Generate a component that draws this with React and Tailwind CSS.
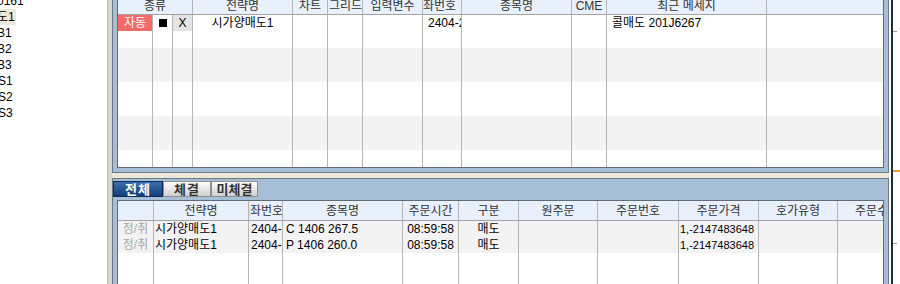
import React from "react";

const LINE = "border-[#b5b5b5]";

function Cell({ w, last, className = "", children }) {
  return (
    <div
      className={`shrink-0 h-full overflow-hidden flex items-center whitespace-nowrap ${w} ${
        last ? "" : `border-r ${LINE}`
      } ${className}`}
    >
      {children}
    </div>
  );
}

const TOP_W = [
  "w-[35px]",
  "w-[20px]",
  "w-[20px]",
  "w-[100px]",
  "w-[35px]",
  "w-[35px]",
  "w-[60px]",
  "w-[39px]",
  "w-[110px]",
  "w-[35px]",
  "w-[160px]",
  "w-[116px]",
];

const BOT_W = [
  "w-[36px]",
  "w-[95px]",
  "w-[34px]",
  "w-[120px]",
  "w-[56px]",
  "w-[60px]",
  "w-[79px]",
  "w-[81px]",
  "w-[80px]",
  "w-[79px]",
  "w-[45px]",
];

const TOP_ROWS = [
  { h: "h-[16px]", bg: "bg-white" },
  { h: "h-[17px]", bg: "bg-white" },
  { h: "h-[17px]", bg: "bg-[#f3f3f3]" },
  { h: "h-[17px]", bg: "bg-[#f3f3f3]" },
  { h: "h-[17px]", bg: "bg-white" },
  { h: "h-[17px]", bg: "bg-white" },
  { h: "h-[17px]", bg: "bg-[#f3f3f3]" },
  { h: "h-[17px]", bg: "bg-[#f3f3f3]" },
  { h: "h-[17px]", bg: "bg-white" },
];

const BOT_ROWS = [
  { bg: "bg-[#f3f3f3]", data: true, item: "C 1406 267.5" },
  { bg: "bg-[#f3f3f3]", data: true, item: "P 1406 260.0" },
  { bg: "bg-white" },
  { bg: "bg-white" },
];

function TopGrid() {
  return (
    <div className="flex-1 min-h-0 flex flex-col overflow-hidden bg-white border-x border-b border-[#5f6b78]">
      <div className="-mt-[3px] h-[18px] shrink-0 flex bg-[#e8f0fb] border-b border-[#a3a3a3] text-[#333]">
        <Cell w="w-[75px]" className="justify-center">종류</Cell>
        <Cell w="w-[100px]" className="justify-center">전략명</Cell>
        <Cell w="w-[35px]" className="justify-center">차트</Cell>
        <Cell w="w-[35px]">
          <span className="ml-[1px]">그리드</span>
        </Cell>
        <Cell w="w-[60px]" className="justify-center">입력변수</Cell>
        <Cell w="w-[39px]">
          <span className="-ml-[11px]">계좌번호</span>
        </Cell>
        <Cell w="w-[110px]" className="justify-center">종목명</Cell>
        <Cell w="w-[35px]" className="justify-center">CME</Cell>
        <Cell w="w-[160px]" className="justify-center">최근 메세지</Cell>
        <Cell w="w-[116px]" last />
      </div>
      {TOP_ROWS.map((r, i) => (
        <div key={i} className={`${r.h} shrink-0 flex ${r.bg}`}>
          {TOP_W.map((w, j) => {
            const last = j === TOP_W.length - 1;
            if (i === 0) {
              if (j === 0)
                return (
                  <Cell key={j} w={w} className="justify-center bg-[#f26a6a] text-white">
                    자동
                  </Cell>
                );
              if (j === 1)
                return (
                  <Cell key={j} w={w} className="justify-center">
                    <div className="w-[8px] h-[8px] bg-black" />
                  </Cell>
                );
              if (j === 2)
                return (
                  <Cell key={j} w={w} className="justify-center bg-[#e4e4e4]">
                    X
                  </Cell>
                );
              if (j === 3)
                return (
                  <Cell key={j} w={w} className="justify-center">
                    시가양매도1
                  </Cell>
                );
              if (j === 7)
                return (
                  <Cell key={j} w={w} className="pl-[5px]">
                    2404-2
                  </Cell>
                );
              if (j === 10)
                return (
                  <Cell key={j} w={w} className="pl-[5px]">
                    콜매도 201J6267
                  </Cell>
                );
            }
            return <Cell key={j} w={w} last={last} />;
          })}
        </div>
      ))}
    </div>
  );
}

function BottomGrid() {
  return (
    <div className="mt-[3px] mx-[4px] flex-1 min-h-0 flex flex-col overflow-hidden bg-white border-t border-x border-[#5f6b78]">
      <div className="h-[20px] shrink-0 flex bg-[#e8f0fb] border-b border-[#a3a3a3] text-[#333]">
        <Cell w={BOT_W[0]} />
        <Cell w={BOT_W[1]} className="justify-center">전략명</Cell>
        <Cell w={BOT_W[2]}>
          <span className="-ml-[10px]">계좌번호</span>
        </Cell>
        <Cell w={BOT_W[3]} className="justify-center">종목명</Cell>
        <Cell w={BOT_W[4]} className="justify-center">주문시간</Cell>
        <Cell w={BOT_W[5]} className="justify-center">구분</Cell>
        <Cell w={BOT_W[6]} className="justify-center">원주문</Cell>
        <Cell w={BOT_W[7]} className="justify-center">주문번호</Cell>
        <Cell w={BOT_W[8]} className="justify-center">주문가격</Cell>
        <Cell w={BOT_W[9]} className="justify-center">호가유형</Cell>
        <Cell w={BOT_W[10]} last className="pl-[17px]">주문수량</Cell>
      </div>
      {BOT_ROWS.map((r, i) => (
        <div key={i} className={`h-[16px] shrink-0 flex ${r.bg}`}>
          {r.data ? (
            <>
              <Cell w={BOT_W[0]} className="justify-center text-[#a8a8a8]">정/취</Cell>
              <Cell w={BOT_W[1]} className="pl-[1px]">시가양매도1</Cell>
              <Cell w={BOT_W[2]} className="pl-[2px]">2404-</Cell>
              <Cell w={BOT_W[3]} className="pl-[3px]">{r.item}</Cell>
              <Cell w={BOT_W[4]} className="justify-center">08:59:58</Cell>
              <Cell w={BOT_W[5]} className="justify-center">매도</Cell>
              <Cell w={BOT_W[6]} />
              <Cell w={BOT_W[7]} />
              <Cell w={BOT_W[8]} className="pl-[1px] text-[11px]">1,-2147483648</Cell>
              <Cell w={BOT_W[9]} />
              <Cell w={BOT_W[10]} last />
            </>
          ) : (
            BOT_W.map((w, j) => <Cell key={j} w={w} last={j === BOT_W.length - 1} />)
          )}
        </div>
      ))}
    </div>
  );
}

export default function App() {
  return (
    <div className="w-[900px] h-[284px] overflow-hidden flex bg-white text-[12px] leading-none text-black font-['Liberation_Sans','Noto_Sans_CJK_KR',sans-serif]">
      {/* left list */}
      <div className="w-[107px] shrink-0 overflow-hidden bg-white">
        <div className="-mt-[7px] flex flex-col">
          <div className="h-[16px] flex items-center whitespace-nowrap -ml-[3px]">0161</div>
          <div className="h-[16px] flex items-center">
            <span className="h-full flex items-center bg-[#ece9d8] -ml-[3px] pr-[1px] whitespace-nowrap">
              도1
            </span>
          </div>
          <div className="h-[16px] flex items-center whitespace-nowrap -ml-[3px]">B1</div>
          <div className="h-[16px] flex items-center whitespace-nowrap -ml-[3px]">B2</div>
          <div className="h-[16px] flex items-center whitespace-nowrap -ml-[3px]">B3</div>
          <div className="h-[16px] flex items-center whitespace-nowrap -ml-[2px]">S1</div>
          <div className="h-[16px] flex items-center whitespace-nowrap -ml-[2px]">S2</div>
          <div className="h-[16px] flex items-center whitespace-nowrap -ml-[2px]">S3</div>
        </div>
      </div>

      {/* splitter */}
      <div className="w-[5px] shrink-0 flex">
        <div className="w-[1px] bg-[#b8b8b8]" />
        <div className="w-[4px] bg-[#d9d6cb]" />
      </div>

      {/* main */}
      <div className="w-[777px] shrink-0 flex flex-col bg-[#ece9d8]">
        <div className="h-[173px] shrink-0 flex flex-col bg-[#a6bfd7] border-x border-b border-[#6d7987] px-[4px] pb-[4px]">
          <TopGrid />
        </div>

        <div className="mt-[5px] flex-1 min-h-0 flex flex-col bg-[#a6bfd7] border-t border-x border-[#6d7987] overflow-hidden">
          <div className="pt-[2px] flex shrink-0">
            <div className="w-[50px] h-[16px] flex items-center justify-center font-bold text-[13px] text-white bg-linear-to-b from-[#3a6fae] to-[#123f7a] border border-[#0d2a55] tracking-[1px]">
              전체
            </div>
            <div className="w-[48px] h-[16px] flex items-center justify-center font-bold text-[13px] text-[#333] bg-linear-to-b from-[#ffffff] to-[#cfcfcf] border border-[#8f8f8f] tracking-[1px]">
              체결
            </div>
            <div className="w-[47px] h-[16px] flex items-center justify-center font-bold text-[13px] text-[#333] bg-linear-to-b from-[#ffffff] to-[#cfcfcf] border border-[#8f8f8f]">
              미체결
            </div>
          </div>
          <BottomGrid />
        </div>
      </div>

      {/* right edge */}
      <div className="w-[11px] shrink-0 flex">
        <div className="w-[2px] bg-white" />
        <div className="w-[2px] bg-[#1e2b3a]" />
        <div className="w-[7px] bg-white flex flex-col">
          <div className="mt-[31px] h-[1px] w-[4px] bg-[#9a9a9a]" />
          <div className="mt-[138px] h-[2px] w-[7px] bg-[#f0a030]" />
          <div className="mt-[71px] h-[1px] w-[4px] bg-[#9a9a9a]" />
        </div>
      </div>
    </div>
  );
}
